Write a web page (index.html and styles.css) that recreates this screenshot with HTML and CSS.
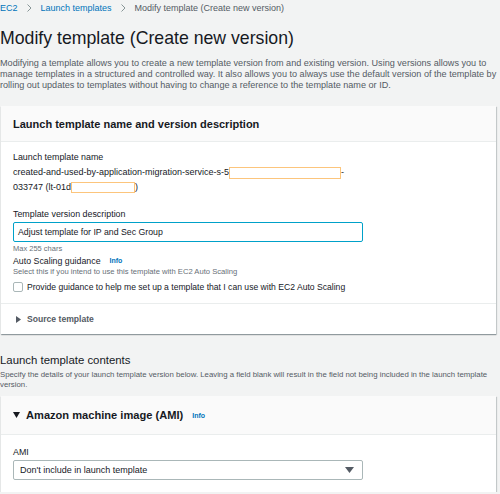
FILE: index.html
```html
<!DOCTYPE html>
<html>
<head>
<meta charset="utf-8">
<link rel="stylesheet" href="styles.css">
</head>
<body>
<nav class="crumbs">
  <a class="crumb-link">EC2</a>
  <svg class="chev" width="5" height="8" viewBox="0 0 5 8"><path d="M0.5 0.5 L4 4 L0.5 7.5" fill="none" stroke="#879596" stroke-width="1"/></svg>
  <a class="crumb-link">Launch templates</a>
  <svg class="chev" width="5" height="8" viewBox="0 0 5 8"><path d="M0.5 0.5 L4 4 L0.5 7.5" fill="none" stroke="#879596" stroke-width="1"/></svg>
  <span class="crumb-current">Modify template (Create new version)</span>
</nav>
<h1 class="title">Modify template (Create new version)</h1>
<p class="intro">Modifying a template allows you to create a new template version from and existing version. Using versions allows you to manage templates in a structured and controlled way. It also allows you to always use the default version of the template by rolling out updates to templates without having to change a reference to the template name or ID.</p>

<section class="panel panel-one">
  <header class="panel-header">
    <h2 class="panel-title">Launch template name and version description</h2>
  </header>
  <div class="panel-body">
    <div class="field-label">Launch template name</div>
    <div class="name-value">created-and-used-by-application-migration-service-s-5<span class="redact redact-a"></span>-<br>033747 (lt-01d<span class="redact redact-b"></span>)</div>
    <div class="field-label label-desc">Template version description</div>
    <div class="text-input">Adjust template for IP and Sec Group</div>
    <div class="hint hint-max">Max 255 chars</div>
    <div class="guidance-row"><span class="guidance-label">Auto Scaling guidance</span><span class="info">Info</span></div>
    <div class="hint">Select this if you intend to use this template with EC2 Auto Scaling</div>
    <label class="check-row"><span class="checkbox"></span><span>Provide guidance to help me set up a template that I can use with EC2 Auto Scaling</span></label>
  </div>
  <div class="panel-footer">
    <svg class="caret-right" width="5" height="7" viewBox="0 0 5 7"><path d="M0 0 L5 3.5 L0 7 Z" fill="#545b64"/></svg>
    <span class="footer-label">Source template</span>
  </div>
</section>

<h2 class="section-title">Launch template contents</h2>
<p class="section-desc">Specify the details of your launch template version below. Leaving a field blank will result in the field not being included in the launch template version.</p>

<section class="panel panel-two">
  <header class="panel-header header-two">
    <svg class="caret-down" width="7" height="6" viewBox="0 0 7 6"><path d="M0 0 L7 0 L3.5 6 Z" fill="#16191f"/></svg>
    <h2 class="panel-title title-lg">Amazon machine image (AMI)</h2>
    <span class="info">Info</span>
  </header>
  <div class="panel-body body-two">
    <div class="field-label">AMI</div>
    <div class="select">
      <span>Don't include in launch template</span>
      <svg width="9" height="6" viewBox="0 0 9 6"><path d="M0 0 L9 0 L4.5 6 Z" fill="#545b64"/></svg>
    </div>
  </div>
</section>
</body>
</html>
```
FILE: styles.css
```css
* { box-sizing: border-box; }
html, body { margin: 0; padding: 0; }
body {
  background: #f2f3f3;
  font-family: "Liberation Sans", Arial, sans-serif;
  color: #16191f;
  width: 500px;
  overflow: hidden;
}
.crumbs {
  display: flex;
  align-items: center;
  height: 16px;
  font-size: 9px;
}
.crumb-link { color: #0073bb; }
.chev { margin: 0 9px 0 9px; }
.crumb-current { color: #545b64; }
.title {
  margin: 11px 0 0 0;
  font-size: 17.7px;
  font-weight: 400;
  line-height: 22px;
}
.intro {
  margin: 9px 0 0 0;
  font-size: 9.1px;
  line-height: 11px;
  color: #545b64;
}
.panel {
  background: #fff;
  margin-left: 1px;
  width: 495px;
  box-shadow: 0 1px 1px 0 rgba(0,28,36,0.3), 1px 1px 1px 0 rgba(0,28,36,0.15);
}
.panel-one { margin-top: 15px; }
.panel-header {
  background: #fafafa;
  border-bottom: 1px solid #eaeded;
  height: 36px;
  display: flex;
  align-items: center;
  padding-left: 12px;
}
.panel-title {
  margin: 0;
  font-size: 11px;
  font-weight: 700;
}
.panel-body { padding: 8px 12px 10px 12px; }
.field-label { font-size: 8.9px; line-height: 15px; }
.name-value { font-size: 9px; line-height: 15px; }
.redact {
  display: inline-block;
  vertical-align: middle;
  border: 1px solid #fcc57c;
  background: #fff;
}
.redact-a { width: 112px; height: 12px; }
.redact-b { width: 64px; height: 11px; }
.label-desc { margin-top: 12px; }
.text-input {
  width: 350px;
  height: 20px;
  border: 1px solid #00a1c9;
  border-radius: 2px;
  font-size: 8.75px;
  line-height: 18px;
  padding-left: 4px;
}
.hint { font-size: 7.65px; line-height: 10px; color: #687078; }
.hint-max { font-size: 7.5px; margin-top: 2px; }
.guidance-row { display: flex; align-items: center; height: 13px; }
.guidance-label { font-size: 8.8px; }
.info { color: #0073bb; font-size: 7px; font-weight: 700; margin-left: 9px; }
.check-row { display: flex; align-items: center; font-size: 8.6px; margin-top: 4px; height: 12px; }
.checkbox {
  width: 10px; height: 10px;
  border: 1px solid #aab7b8;
  border-radius: 2px;
  margin-right: 4px;
}
.panel-footer {
  border-top: 1px solid #eaeded;
  height: 31px;
  display: flex;
  align-items: center;
  padding-left: 15px;
}
.footer-label { font-size: 8.6px; font-weight: 700; color: #545b64; margin-left: 6px; }
.section-title {
  margin: 18px 0 0 0;
  font-size: 11.4px;
  font-weight: 400;
  line-height: 16px;
}
.section-desc {
  margin: 2px 0 0 0;
  font-size: 7.8px;
  line-height: 10px;
  color: #545b64;
}
.panel-two { margin-top: 6px; }
.header-two { height: 39px; }
.caret-down { margin-right: 6px; }
.title-lg { font-size: 11.1px; }
.body-two { padding-top: 10px; padding-bottom: 12px; }
.select {
  margin-top: 0;
  width: 350px;
  height: 20px;
  border: 1px solid #aab7b8;
  border-radius: 2px;
  display: flex;
  align-items: center;
  justify-content: space-between;
  padding: 0 8px 0 6px;
  font-size: 9px;
}
```
